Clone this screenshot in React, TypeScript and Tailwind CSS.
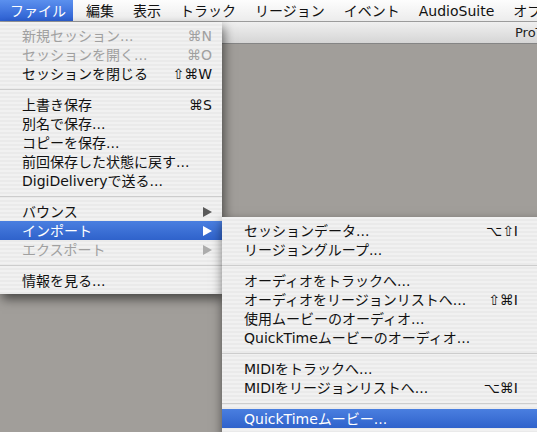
import React from "react";

type Item =
  | { sep: true }
  | { label: string; key?: string; disabled?: boolean; arrow?: boolean; active?: boolean };

const fileItems: Item[] = [
  { label: "新規セッション...", key: "⌘N", disabled: true },
  { label: "セッションを開く...", key: "⌘O", disabled: true },
  { label: "セッションを閉じる", key: "⇧⌘W" },
  { sep: true },
  { label: "上書き保存", key: "⌘S" },
  { label: "別名で保存..." },
  { label: "コピーを保存..." },
  { label: "前回保存した状態に戻す..." },
  { label: "DigiDeliveryで送る..." },
  { sep: true },
  { label: "バウンス", arrow: true },
  { label: "インポート", arrow: true, active: true },
  { label: "エクスポート", arrow: true, disabled: true },
  { sep: true },
  { label: "情報を見る..." },
];

const importItems: Item[] = [
  { label: "セッションデータ...", key: "⌥⇧I" },
  { label: "リージョングループ..." },
  { sep: true },
  { label: "オーディオをトラックへ..." },
  { label: "オーディオをリージョンリストへ...", key: "⇧⌘I" },
  { label: "使用ムービーのオーディオ..." },
  { label: "QuickTimeムービーのオーディオ..." },
  { sep: true },
  { label: "MIDIをトラックへ..." },
  { label: "MIDIをリージョンリストへ...", key: "⌥⌘I" },
  { sep: true },
  { label: "QuickTimeムービー...", active: true },
];

const menuBg =
  "bg-[repeating-linear-gradient(to_bottom,#f1f1f1_0px,#f1f1f1_2px,#eaeaea_2px,#eaeaea_4px)]";

function Arrow({ color }: { color: string }) {
  return (
    <svg width="9" height="10" viewBox="0 0 9 10">
      <polygon points="0,0 9,5 0,10" fill={color} />
    </svg>
  );
}

function MenuRows({ items, inner }: { items: Item[]; inner: string }) {
  return (
    <>
      {items.map((item, i) => {
        if ("sep" in item) {
          return (
            <div key={i} className="flex h-[12px] items-center">
              <div className="h-px w-full bg-[#cdcdcd]" />
            </div>
          );
        }
        const text = item.active ? "text-white" : item.disabled ? "text-[#a0a0a0]" : "text-[#111]";
        return (
          <div
            key={i}
            className={`flex h-[19px] items-center pl-[22px] ${
              item.active ? "bg-[linear-gradient(to_bottom,#4a7fe0,#2f62cb)]" : ""
            } ${text}`}
          >
            <div className={`flex ${inner} items-center justify-between`}>
              <span className="whitespace-nowrap">{item.label}</span>
              {item.key && <span className="whitespace-nowrap">{item.key}</span>}
              {item.arrow && (
                <Arrow color={item.active ? "#ffffff" : item.disabled ? "#acacac" : "#5a5a5a"} />
              )}
            </div>
          </div>
        );
      })}
    </>
  );
}

export default function App() {
  return (
    <div className="relative h-[432px] w-[537px] overflow-hidden bg-[#a19e9a] font-['DejaVu_Sans','Noto_Sans_CJK_JP',sans-serif] text-[14px] leading-none">
      <div className="flex h-[22px] items-center overflow-hidden border-b border-[#9c9c9c] bg-[linear-gradient(to_bottom,#fdfdfd,#ececec)] text-[#111]">
        <div className="flex h-full w-[73px] shrink-0 items-center whitespace-nowrap bg-[linear-gradient(to_bottom,#5b90ee,#2c5fd2)] pl-[10px] text-white">
          ファイル
        </div>
        <div className="ml-[13px] flex shrink-0 gap-[19px] whitespace-nowrap">
          <span>編集</span>
          <span>表示</span>
          <span>トラック</span>
          <span>リージョン</span>
          <span>イベント</span>
          <span>AudioSuite</span>
          <span>オプション</span>
        </div>
      </div>

      <div className="flex h-[22px] items-center overflow-hidden border-b border-[#858585] bg-[linear-gradient(to_bottom,#f0f0f0,#d5d5d5)] pl-[515px] text-[13px] whitespace-nowrap text-[#222]">
        <span className="shrink-0">ProTools LE</span>
      </div>

      <div
        className={`absolute top-[22px] left-0 w-[222px] py-[4px] shadow-[2px_5px_10px_rgba(0,0,0,0.55)] ${menuBg}`}
      >
        <MenuRows items={fileItems} inner="w-[190px]" />
      </div>

      <div
        className={`absolute top-[217px] left-[222px] w-[330px] pt-[4px] pb-[8px] shadow-[0_4px_10px_rgba(0,0,0,0.5)] ${menuBg}`}
      >
        <MenuRows items={importItems} inner="w-[274px]" />
      </div>
    </div>
  );
}
